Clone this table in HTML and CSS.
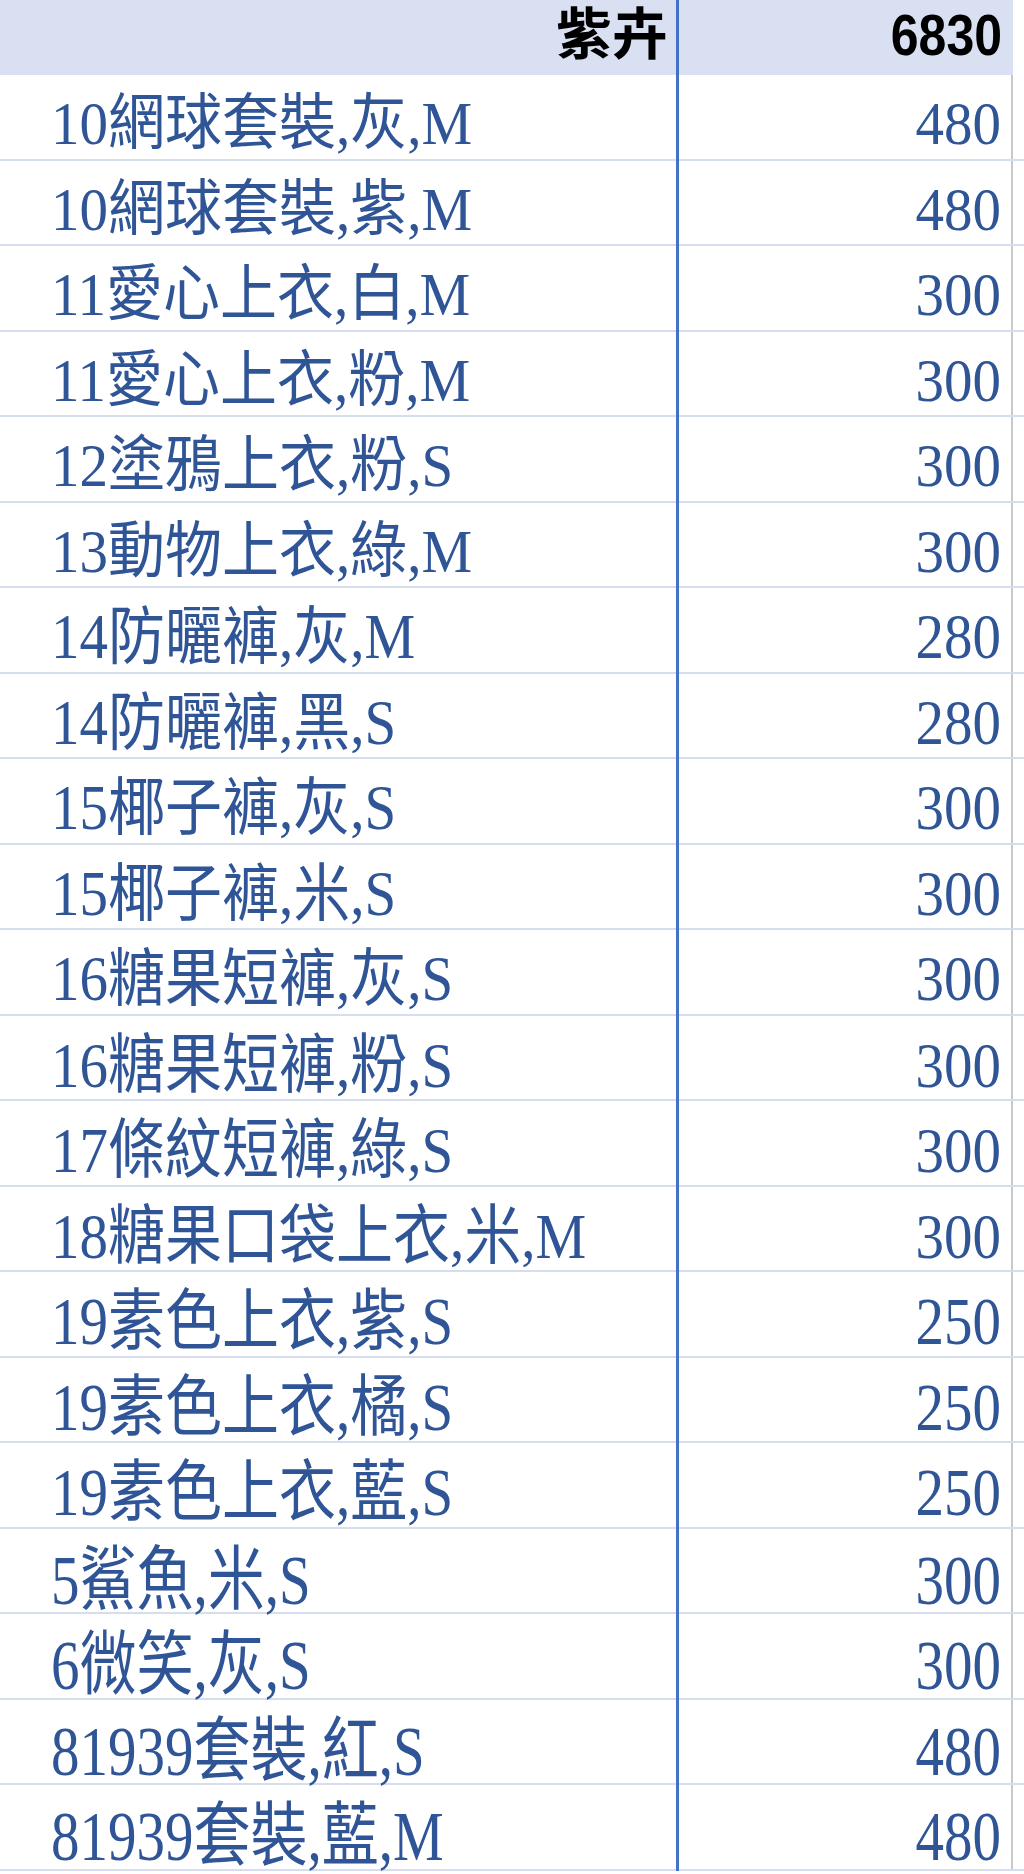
FILE: index.html
```html
<!DOCTYPE html>
<html lang="zh-Hant">
<head>
<meta charset="utf-8">
<title>紫卉</title>
<link rel="stylesheet" href="styles.css">
</head>
<body>
<div class="sheet">
  <div class="row head">
    <div class="cell name"><span class="hz">紫卉</span></div>
    <div class="vline"></div>
    <div class="cell num"><span class="hn">6830</span></div>
    <div class="pad"></div>
  </div>
  <div class="row"><div class="cell name"><span class="t">10網球套裝,灰,M</span></div><div class="vline"></div><div class="cell num"><span class="t">480</span></div><div class="gline"></div><div class="cell pad"></div></div>
  <div class="row"><div class="cell name"><span class="t">10網球套裝,紫,M</span></div><div class="vline"></div><div class="cell num"><span class="t">480</span></div><div class="gline"></div><div class="cell pad"></div></div>
  <div class="row"><div class="cell name"><span class="t">11愛心上衣,白,M</span></div><div class="vline"></div><div class="cell num"><span class="t">300</span></div><div class="gline"></div><div class="cell pad"></div></div>
  <div class="row"><div class="cell name"><span class="t">11愛心上衣,粉,M</span></div><div class="vline"></div><div class="cell num"><span class="t">300</span></div><div class="gline"></div><div class="cell pad"></div></div>
  <div class="row"><div class="cell name"><span class="t">12塗鴉上衣,粉,S</span></div><div class="vline"></div><div class="cell num"><span class="t">300</span></div><div class="gline"></div><div class="cell pad"></div></div>
  <div class="row"><div class="cell name"><span class="t">13動物上衣,綠,M</span></div><div class="vline"></div><div class="cell num"><span class="t">300</span></div><div class="gline"></div><div class="cell pad"></div></div>
  <div class="row"><div class="cell name"><span class="t">14防曬褲,灰,M</span></div><div class="vline"></div><div class="cell num"><span class="t">280</span></div><div class="gline"></div><div class="cell pad"></div></div>
  <div class="row"><div class="cell name"><span class="t">14防曬褲,黑,S</span></div><div class="vline"></div><div class="cell num"><span class="t">280</span></div><div class="gline"></div><div class="cell pad"></div></div>
  <div class="row"><div class="cell name"><span class="t">15椰子褲,灰,S</span></div><div class="vline"></div><div class="cell num"><span class="t">300</span></div><div class="gline"></div><div class="cell pad"></div></div>
  <div class="row"><div class="cell name"><span class="t">15椰子褲,米,S</span></div><div class="vline"></div><div class="cell num"><span class="t">300</span></div><div class="gline"></div><div class="cell pad"></div></div>
  <div class="row"><div class="cell name"><span class="t">16糖果短褲,灰,S</span></div><div class="vline"></div><div class="cell num"><span class="t">300</span></div><div class="gline"></div><div class="cell pad"></div></div>
  <div class="row"><div class="cell name"><span class="t">16糖果短褲,粉,S</span></div><div class="vline"></div><div class="cell num"><span class="t">300</span></div><div class="gline"></div><div class="cell pad"></div></div>
  <div class="row"><div class="cell name"><span class="t">17條紋短褲,綠,S</span></div><div class="vline"></div><div class="cell num"><span class="t">300</span></div><div class="gline"></div><div class="cell pad"></div></div>
  <div class="row"><div class="cell name"><span class="t">18糖果口袋上衣,米,M</span></div><div class="vline"></div><div class="cell num"><span class="t">300</span></div><div class="gline"></div><div class="cell pad"></div></div>
  <div class="row"><div class="cell name"><span class="t">19素色上衣,紫,S</span></div><div class="vline"></div><div class="cell num"><span class="t">250</span></div><div class="gline"></div><div class="cell pad"></div></div>
  <div class="row"><div class="cell name"><span class="t">19素色上衣,橘,S</span></div><div class="vline"></div><div class="cell num"><span class="t">250</span></div><div class="gline"></div><div class="cell pad"></div></div>
  <div class="row"><div class="cell name"><span class="t">19素色上衣,藍,S</span></div><div class="vline"></div><div class="cell num"><span class="t">250</span></div><div class="gline"></div><div class="cell pad"></div></div>
  <div class="row"><div class="cell name"><span class="t">5鯊魚,米,S</span></div><div class="vline"></div><div class="cell num"><span class="t">300</span></div><div class="gline"></div><div class="cell pad"></div></div>
  <div class="row"><div class="cell name"><span class="t">6微笑,灰,S</span></div><div class="vline"></div><div class="cell num"><span class="t">300</span></div><div class="gline"></div><div class="cell pad"></div></div>
  <div class="row"><div class="cell name"><span class="t">81939套裝,紅,S</span></div><div class="vline"></div><div class="cell num"><span class="t">480</span></div><div class="gline"></div><div class="cell pad"></div></div>
  <div class="row"><div class="cell name"><span class="t">81939套裝,藍,M</span></div><div class="vline"></div><div class="cell num"><span class="t">480</span></div><div class="gline"></div><div class="cell pad"></div></div>
</div>
</body>
</html>
```
FILE: styles.css
```css
* {
  box-sizing: border-box;
}

html, body {
  margin: 0;
  padding: 0;
  background: #ffffff;
}

.sheet {
  width: 1024px;
  display: flex;
  flex-direction: column;
}

.row {
  --sy: 1.08;
  display: grid;
  grid-template-columns: 676px 3px 332px 2px 11px;
  height: 85.5px;
  font-family: "Liberation Serif", "Noto Sans CJK TC", serif;
  font-size: 57px;
  color: #2f5597;
}

.row:nth-child(n+8) { --sy: 1.1; }
.row:nth-child(n+13) { --sy: 1.13; }
.row:nth-child(n+16) { --sy: 1.17; }
.row:nth-child(n+19) { --sy: 1.24; }

.row.head {
  grid-template-columns: 676px 3px 334px 11px;
  height: 75px;
}

.cell {
  border-bottom: 2px solid #d6ddef;
  line-height: 62px;
  padding-top: 16px;
  white-space: nowrap;
}

.cell.name {
  padding-left: 51px;
}

.cell.num {
  text-align: right;
  padding-right: 10px;
}

.t {
  display: inline-block;
  line-height: 50px;
  transform: scaleY(var(--sy));
  transform-origin: 0 6px;
}

.vline {
  background: #4472c4;
}

.gline {
  background: #c9c9c9;
  border-bottom: 2px solid #d6ddef;
}

.head .cell {
  border-bottom: none;
  background: #d9e0f2;
  color: #000000;
  line-height: 56px;
}

.head .cell.name {
  text-align: right;
  padding-right: 8px;
  padding-top: 7px;
}

.head .cell.num {
  padding-right: 11px;
  padding-top: 8px;
}

.head .pad {
  background: #ffffff;
}

.hz {
  font-family: "Liberation Serif", "Noto Sans CJK TC", serif;
  font-weight: 700;
  font-size: 56px;
}

.hn {
  display: inline-block;
  font-family: "Liberation Sans", sans-serif;
  font-weight: 700;
  font-size: 50px;
  line-height: 56px;
  transform: scaleY(1.15);
  transform-origin: 50% 45px;
}
```
